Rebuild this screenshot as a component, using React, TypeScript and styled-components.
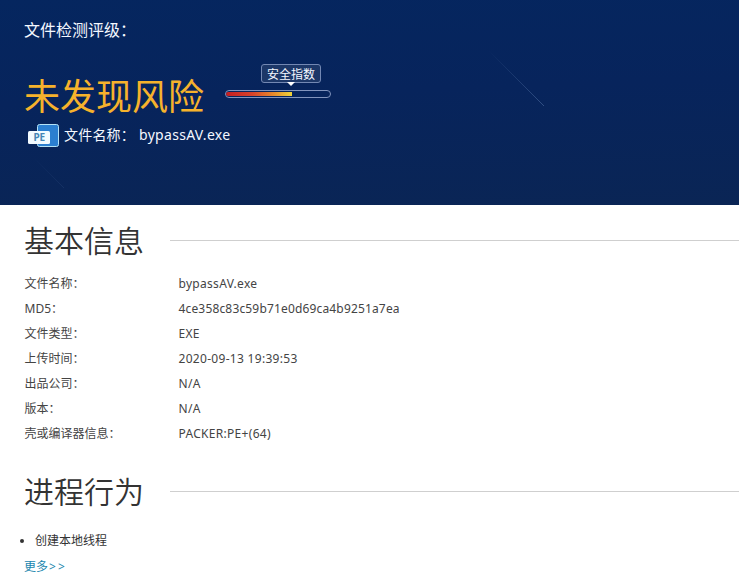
import React from 'react';
import styled, { createGlobalStyle } from 'styled-components';

const GlobalStyle = createGlobalStyle`
  * { box-sizing: border-box; }
  body {
    margin: 0;
    background: #fff;
    color: #444;
    font-family: "Noto Sans", "Noto Sans CJK SC", sans-serif;
    font-size: 12px;
  }
`;

const Page = styled.main`
  width: 739px;
  height: 577px;
  overflow: hidden;
`;

const Hero = styled.header`
  position: relative;
  height: 205px;
  padding: 18px 24px 0;
  color: #f4f8ff;
  background: linear-gradient(178deg, #05265f 0%, #07245c 45%, #0a2555 100%);
`;

const Streaks = styled.svg`
  position: absolute;
  inset: 0;
`;

const RatingLabel = styled.div`
  height: 24px;
  line-height: 24px;
  font-size: 16px;
`;

const RatingRow = styled.div`
  display: flex;
  margin-top: 22px;
  height: 59px;
`;

const Verdict = styled.h1`
  margin: 0;
  width: 201px;
  padding-top: 7px;
  line-height: 52px;
  font-size: 36px;
  font-weight: 400;
  white-space: nowrap;
  color: #f6b22c;
`;

const Gauge = styled.div`
  display: flex;
  flex-direction: column;
  width: 106px;
`;

const GaugeTag = styled.div`
  align-self: flex-start;
  margin-left: 36px;
  width: 60px;
  height: 19px;
  border: 1px solid #7388b3;
  border-radius: 3px;
  background: #1c3768;
  font-size: 12px;
  line-height: 19px;
  text-align: center;
  white-space: nowrap;
`;

const GaugePointer = styled.i`
  margin: -1px 0 4px 62px;
  width: 0;
  border: 4px solid transparent;
  border-top-color: #fff;
  border-bottom: 0;
`;

const GaugeTrack = styled.div`
  height: 8px;
  border: 1px solid #8294bd;
  border-radius: 4px;
  overflow: hidden;
  padding: 1px 0;
`;

const GaugeFill = styled.div`
  width: 66px;
  height: 4px;
  border-radius: 2px 0 0 2px;
  background: linear-gradient(90deg, #c41d22, #d8432a 40%, #e88a2c 72%, #f0d53a);
`;

const FileLine = styled.div`
  display: flex;
  align-items: center;
  height: 24px;
  padding-left: 4px;
  font-size: 14px;
  line-height: 24px;
  white-space: nowrap;
`;

const FileLabel = styled.span`
  width: 75px;
  margin-left: 5px;
  letter-spacing: 0.2px;
`;

const FileName = styled.span`
  letter-spacing: 0.3px;
`;

const Section = styled.section`
  padding-left: 24px;
`;

const SectionHead = styled.div<{ $top: number }>`
  display: flex;
  align-items: center;
  height: 44px;
  margin-top: ${(p) => p.$top}px;
`;

const SectionTitle = styled.h2`
  margin: 0;
  width: 146px;
  padding-bottom: 3px;
  font-size: 30px;
  line-height: 41px;
  font-weight: 350;
  font-family: "Noto Sans CJK SC", sans-serif;
  color: #333;
  white-space: nowrap;
`;

const Rule = styled.div`
  flex: 1;
  height: 1px;
  margin-bottom: 2px;
  background: #cfcfcf;
`;

const Details = styled.dl`
  display: grid;
  grid-template-columns: 154px 1fr;
  grid-auto-rows: 25px;
  align-items: center;
  margin: 8px 0 0;
`;

const Term = styled.dt`
  padding-left: 0.5px;
  line-height: 25px;
`;

const Value = styled.dd<{ $long: boolean }>`
  margin: 0;
  padding-left: 0.5px;
  line-height: 25px;
  letter-spacing: ${(p) => (p.$long ? 0.16 : 0.3)}px;
`;

const Behaviours = styled.ul`
  margin: 13px 0 0;
  padding: 0;
  list-style: none;
`;

const Behaviour = styled.li`
  display: flex;
  align-items: center;
  height: 25px;
  margin-left: -4px;
  color: #333;

  &::before {
    content: '';
    width: 4px;
    height: 4px;
    margin: 3px 11px 0 0;
    border-radius: 50%;
    background: #333;
  }
`;

const More = styled.a`
  display: block;
  margin-top: 2px;
  height: 25px;
  line-height: 25px;
  color: #2287ae;
`;

const Arrows = styled.span`
  margin-left: 1px;
  letter-spacing: 2px;
`;

const details: [string, string][] = [
  ['文件名称：', 'bypassAV.exe'],
  ['MD5：', '4ce358c83c59b71e0d69ca4b9251a7ea'],
  ['文件类型：', 'EXE'],
  ['上传时间：', '2020-09-13 19:39:53'],
  ['出品公司：', 'N/A'],
  ['版本：', 'N/A'],
  ['壳或编译器信息：', 'PACKER:PE+(64)'],
];

const PeIcon = () => (
  <svg width="31" height="24" viewBox="0 0 31 24">
    <rect x="9.5" y="1.5" width="21" height="22" rx="2" fill="#2b7fd0" stroke="#b4e2f6" />
    <rect x="0" y="8" width="22" height="13" rx="1.5" fill="#f2faff" />
    <text x="11.3" y="18" textAnchor="middle" fontFamily="Noto Sans" fontSize="10" fontWeight="700" fill="#4385b5">PE</text>
  </svg>
);

export default function App() {
  return (
    <Page>
      <GlobalStyle />
      <Hero>
        <Streaks width="739" height="205">
          <defs>
            <linearGradient id="streak" x1="0" y1="0" x2="1" y2="1">
              <stop offset="0" stopColor="#5474a8" stopOpacity="0" />
              <stop offset="1" stopColor="#5474a8" stopOpacity="0.55" />
            </linearGradient>
          </defs>
          <path d="M488 50L544 106" stroke="url(#streak)" />
          <path d="M32 156L64 188" stroke="url(#streak)" opacity="0.3" />
        </Streaks>
        <RatingLabel>文件检测评级：</RatingLabel>
        <RatingRow>
          <Verdict>未发现风险</Verdict>
          <Gauge>
            <GaugeTag>安全指数</GaugeTag>
            <GaugePointer />
            <GaugeTrack>
              <GaugeFill />
            </GaugeTrack>
          </Gauge>
        </RatingRow>
        <FileLine>
          <PeIcon />
          <FileLabel>文件名称：</FileLabel>
          <FileName>bypassAV.exe</FileName>
        </FileLine>
      </Hero>
      <Section>
        <SectionHead $top={14}>
          <SectionTitle>基本信息</SectionTitle>
          <Rule />
        </SectionHead>
        <Details>
          {details.map(([term, value]) => (
            <React.Fragment key={term}>
              <Term>{term}</Term>
              <Value $long={value.length > 24}>{value}</Value>
            </React.Fragment>
          ))}
        </Details>
      </Section>
      <Section>
        <SectionHead $top={24}>
          <SectionTitle>进程行为</SectionTitle>
          <Rule />
        </SectionHead>
        <Behaviours>
          <Behaviour>创建本地线程</Behaviour>
        </Behaviours>
        <More>更多<Arrows>&gt;&gt;</Arrows></More>
      </Section>
    </Page>
  );
}
